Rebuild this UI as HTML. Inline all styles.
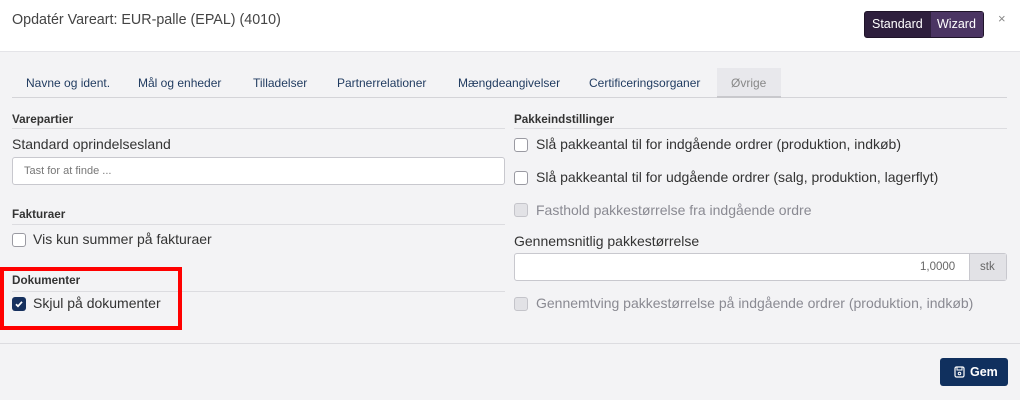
<!DOCTYPE html>
<html><head><meta charset="utf-8"><style>
*{box-sizing:border-box;margin:0;padding:0}
body{width:1020px;height:400px;background:#f3f3f5;font-family:"Liberation Sans",sans-serif;color:#333;position:relative;overflow:hidden}
.a{position:absolute;white-space:nowrap}
.hdr{position:absolute;left:0;top:0;width:1020px;height:52px;background:#fff;border-bottom:1px solid #e4e4e8}
.tab{position:absolute;top:76px;font-size:12px;color:#1f3a5f}
.sec{position:absolute;font-size:11.7px;font-weight:bold;color:#333}
.line{position:absolute;height:1px;background:#dcdce0}
.cb{position:absolute;width:14px;height:14px;border:1px solid #9a9aa2;border-radius:3px;background:#fff}
.cb.d{background:#e2e2e6;border-color:#c4c4ca}
.lbl{position:absolute;font-size:14px;color:#333;white-space:nowrap}
.lbl.d{color:#8a8a92}
</style></head><body>
<div class="hdr"></div>
<div class="a" style="left:12px;top:12px;font-size:14.3px;color:#444">Opdatér Vareart: EUR-palle (EPAL) (4010)</div>
<div class="a" style="left:864px;top:11px;width:120px;height:27px;border-radius:3px;background:#2e1f3d;border:1px solid #1f1429"></div>
<div class="a" style="left:931px;top:12px;width:52px;height:25px;background:#4b3563"></div>
<div class="a" style="left:872px;top:17px;font-size:12.5px;color:#fff">Standard</div>
<div class="a" style="left:937px;top:17px;font-size:12.5px;color:#fff">Wizard</div>
<div class="a" style="left:998px;top:11px;font-size:13px;color:#888">×</div>

<div class="a" style="left:717px;top:68px;width:64px;height:29px;background:#e8e8ec"></div>
<div class="line" style="left:12px;top:97px;width:995px;background:#d4d4d8"></div>
<div class="a" style="left:717px;top:96px;width:64px;height:2px;background:#c8c8cc"></div>
<div class="tab" style="left:26px">Navne og ident.</div>
<div class="tab" style="left:138px">Mål og enheder</div>
<div class="tab" style="left:253px">Tilladelser</div>
<div class="tab" style="left:337px">Partnerrelationer</div>
<div class="tab" style="left:458px">Mængdeangivelser</div>
<div class="tab" style="left:589px">Certificeringsorganer</div>
<div class="tab" style="left:731px;color:#888">Øvrige</div>

<div class="sec" style="left:12px;top:113px">Varepartier</div>
<div class="line" style="left:12px;top:128px;width:493px"></div>
<div class="lbl" style="left:12px;top:136px">Standard oprindelsesland</div>
<div class="a" style="left:12px;top:157px;width:493px;height:28px;background:#fff;border:1px solid #c8c8ce;border-radius:3px"></div>
<div class="a" style="left:24px;top:165px;font-size:11px;color:#777">Tast for at finde ...</div>
<div class="sec" style="left:12px;top:208px">Fakturaer</div>
<div class="line" style="left:12px;top:224px;width:493px"></div>
<div class="cb" style="left:12px;top:233px"></div>
<div class="lbl" style="left:33px;top:231px">Vis kun summer på fakturaer</div>
<div class="sec" style="left:12px;top:274px">Dokumenter</div>
<div class="line" style="left:12px;top:291px;width:493px"></div>
<div class="a" style="left:12px;top:297px;width:14px;height:14px;border-radius:3px;background:#16305e"></div>
<svg class="a" style="left:14px;top:299px" width="10" height="10" viewBox="0 0 10 10"><path d="M2 5.2l2 2 4-4.4" stroke="#fff" stroke-width="1.8" fill="none"/></svg>
<div class="lbl" style="left:33px;top:295px">Skjul på dokumenter</div>
<div class="a" style="left:0;top:267px;width:182px;height:63px;border:4px solid #ff0000"></div>

<div class="sec" style="left:514px;top:113px">Pakkeindstillinger</div>
<div class="line" style="left:514px;top:128px;width:493px"></div>
<div class="cb" style="left:514px;top:138px"></div>
<div class="lbl" style="left:536px;top:136px">Slå pakkeantal til for indgående ordrer (produktion, indkøb)</div>
<div class="cb" style="left:514px;top:171px"></div>
<div class="lbl" style="left:536px;top:169px">Slå pakkeantal til for udgående ordrer (salg, produktion, lagerflyt)</div>
<div class="cb d" style="left:514px;top:203px"></div>
<div class="lbl d" style="left:536px;top:202px">Fasthold pakkestørrelse fra indgående ordre</div>
<div class="lbl" style="left:514px;top:233px">Gennemsnitlig pakkestørrelse</div>
<div class="a" style="left:514px;top:253px;width:493px;height:28px;background:#fff;border:1px solid #c8c8ce;border-radius:3px"></div>
<div class="a" style="left:969px;top:254px;width:37px;height:26px;background:#e2e2e6;border-left:1px solid #c8c8ce"></div>
<div class="a" style="left:920px;top:261px;font-size:11.5px;color:#666">1,0000</div>
<div class="a" style="left:980px;top:261px;font-size:11.5px;color:#666">stk</div>
<div class="cb d" style="left:514px;top:297px"></div>
<div class="lbl d" style="left:536px;top:295px">Gennemtving pakkestørrelse på indgående ordrer (produktion, indkøb)</div>

<div class="line" style="left:0;top:343px;width:1020px;background:#dcdce0"></div>
<div class="a" style="left:940px;top:358px;width:68px;height:28px;background:#10305e;border-radius:3px"></div>
<svg class="a" style="left:954px;top:366px" width="11" height="12" viewBox="0 0 11 12"><rect x="1" y="1" width="9" height="10" rx="1.5" fill="none" stroke="#fff" stroke-width="1.2"/><rect x="3" y="1" width="5" height="3" fill="none" stroke="#fff" stroke-width="1"/><circle cx="5.5" cy="7.5" r="1.3" fill="none" stroke="#fff"/></svg>
<div class="a" style="left:970px;top:365px;font-size:12.5px;font-weight:bold;color:#fff">Gem</div>
</body></html>
